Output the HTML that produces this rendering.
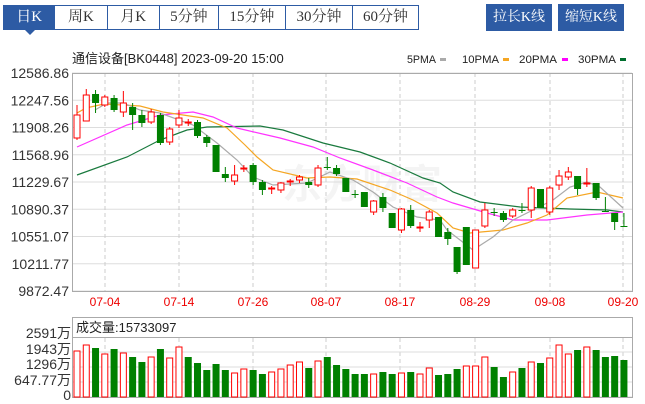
<!DOCTYPE html>
<html><head><meta charset="utf-8"><style>
body{margin:0;width:645px;height:404px;background:#fff;overflow:hidden;font-family:"Liberation Sans","Noto Sans CJK SC",sans-serif;position:relative}
.tabs{position:absolute;left:3px;top:5px;height:25px;display:flex;border:1px solid #2d5ba4;box-sizing:border-box;width:416px}
.tabs div{height:23px;line-height:23px;text-align:center;font-size:15px;color:#333;border-right:1px solid #2d5ba4;font-family:"Liberation Serif","Noto Serif CJK SC",serif}
.tabs div:last-child{border-right:none}
.tabs .on{background:#2d5ba4;color:#fff;position:relative}
.tabs .on:after{content:"";position:absolute;left:20px;top:23px;border:6px solid transparent;border-top:6px solid #2d5ba4}
.btn{position:absolute;top:4px;height:27px;line-height:27px;background:#2d5ba4;color:#fff;font-size:14px;text-align:center;width:66px;font-family:"Liberation Serif","Noto Serif CJK SC",serif}
svg{position:absolute;left:0;top:0}
</style></head><body>
<div class="tabs"><div class="on" style="width:51px">日K</div><div style="width:52px">周K</div><div style="width:52px">月K</div><div style="width:59px">5分钟</div><div style="width:67px">15分钟</div><div style="width:67px">30分钟</div><div style="width:66px">60分钟</div></div>
<div class="btn" style="left:486px">拉长K线</div>
<div class="btn" style="left:558px">缩短K线</div>
<svg id="s" width="645" height="404" xmlns="http://www.w3.org/2000/svg" font-family="Liberation Sans, Noto Sans CJK SC, sans-serif">
<text x="72" y="63" font-size="13" fill="#222">通信设备[BK0448] 2023-09-20 15:00</text>
<g font-size="11" fill="#222">
<text x="407" y="63" textLength="29" lengthAdjust="spacingAndGlyphs">5PMA</text><rect x="440" y="58" width="6" height="3" fill="#aaa"/>
<text x="462" y="63" textLength="37" lengthAdjust="spacingAndGlyphs">10PMA</text><rect x="503" y="58" width="6" height="3" fill="#f5a623"/>
<text x="519" y="63" textLength="38" lengthAdjust="spacingAndGlyphs">20PMA</text><rect x="562" y="58" width="6" height="3" fill="#f0f"/>
<text x="578" y="63" textLength="38" lengthAdjust="spacingAndGlyphs">30PMA</text><rect x="620" y="58" width="6" height="3" fill="#006f2e"/>
</g>
<text x="362" y="198" font-size="40" fill="#000" opacity="0.04" text-anchor="middle" font-weight="bold">东方财富</text>
<g font-size="14" fill="#333" text-anchor="end" id="yl"></g>
<g font-size="12" fill="#e00" text-anchor="middle">
<text x="105" y="306">07-04</text><text x="179" y="306">07-14</text><text x="253" y="306">07-26</text><text x="326" y="306">08-07</text><text x="400" y="306">08-17</text><text x="475" y="306">08-29</text><text x="550" y="306">09-08</text><text x="623" y="306">09-20</text>
</g>
<rect x="72.5" y="317.5" width="560" height="20" fill="#fff" stroke="#aaa"/>
<text x="76" y="332" font-size="13" fill="#222">成交量:15733097</text>
<g font-size="14" fill="#333" text-anchor="end">
<text x="71" y="338">2591万</text><text x="71" y="354">1943万</text><text x="71" y="369">1296万</text><text x="71" y="385">647.77万</text><text x="71" y="400">0</text>
</g>
<g id="g"></g>
</svg>
<script>
var g=document.getElementById('g'),h='';
var labs=["12586.86","12247.56","11908.26","11568.96","11229.67","10890.37","10551.07","10211.77","9872.47"];
var yl='';
for(var i=0;i<9;i++){var y=73+i*27.25;h+='<line x1="72" x2="632" y1="'+y+'" y2="'+y+'" stroke="#ddd"/>';yl+='<text x="69" y="'+(y+5)+'">'+labs[i]+'</text>';}
document.getElementById('yl').innerHTML=yl;
var vx=[105,179,253,326,400,475,550,623];
vx.forEach(function(x){h+='<line x1="'+x+'" x2="'+x+'" y1="73" y2="291" stroke="#ccc" stroke-dasharray="4,3"/>';h+='<line x1="'+x+'" x2="'+x+'" y1="338" y2="397" stroke="#ccc" stroke-dasharray="4,3"/>';});
for(var i=0;i<4;i++){var y=352+i*15;h+='<line x1="72" x2="632" y1="'+y+'" y2="'+y+'" stroke="#ddd"/>';}
h+='<rect x="72.5" y="73.5" width="560" height="218" fill="none" stroke="#aaa"/>';
h+='<rect x="72.5" y="337.5" width="560" height="60" fill="none" stroke="#aaa"/>';
function pl(pts,c){h+='<polyline fill="none" stroke="'+c+'" stroke-width="1.2" points="'+pts+'"/>';}
pl("77,175 127,157 160,140 187,130 207,127 260,126 283,130 323,143 360,152 390,163 423,178 440,183 453,192 480,202 520,207 570,209 607,210 623,212","#1a7a3e");
pl("77,147 127,125 160,115 193,112 213,117 237,128 267,135 280,138 313,147 340,158 373,170 407,183 437,197 453,203 487,213 513,220 547,220 587,215 623,212","#ff33ff");
pl("77,113 86,108 104,104 140,106 163,112 203,118 227,128 245,145 257,157 273,170 307,178 330,177 357,179 390,190 413,200 437,213 453,228 470,233 503,230 527,223 547,215 567,198 597,192 623,198","#f5a623");
pl("95,110 107,103 123,103 140,110 160,113 193,125 217,143 237,160 253,177 273,185 307,183 330,172 353,180 373,192 393,207 417,217 440,220 447,230 473,250 493,237 513,220 537,208 553,200 570,187 587,182 600,187 623,208","#aaa");
var c=[
['R',115,138,105,140],['R',95,121,89,121],['G',94,103,90,113],['R',97,105,95,107],['G',98,110,95,112],['R',103,112,91,117],['G',107,115,103,130],['G',115,123,110,127],['R',112,122,109,124],['G',115,143,113,145],
['R',129,142,127,145],['R',118,125,110,128],['R',122,122,119,126],['G',122,136,120,138],['G',137,143,135,147],['G',145,172,145,172],['G',174,178,167,182],['R',175,181,165,185],['R',168,168,165,172],['G',165,182,163,185],
['G',182,190,180,195],['R',188,188,186,194],['R',183,190,182,193],['R',181,181,179,186],['R',177,180,175,183],['G',182,185,178,188],['R',168,185,165,187],['G',167,167,157,170],['G',168,174,165,176],['G',178,192,178,192],
['G',194,194,190,198],['G',192,207,192,207],['R',201,212,200,215],['G',197,208,193,212],['G',213,228,213,228],['R',209,230,208,233],['G',210,226,205,228],['R',227,227,222,232],['R',212,220,210,228],['G',217,237,217,237],
['G',232,239,228,245],['G',247,272,247,274],['G',227,265,227,265],['R',230,268,230,268],['R',210,226,203,228],['G',212,212,208,216],['G',213,220,211,222],['R',210,216,208,218],['G',210,210,203,213],['R',188,210,186,218],
['G',189,208,189,208],['R',188,212,186,215],['R',176,185,170,190],['R',172,177,167,180],['G',176,189,176,195],['R',183,183,168,187],['G',183,198,183,200],['G',211,211,197,212],['G',213,222,213,230],['G',226,226,213,227]];
var v=[['R',351],['R',345],['G',348],['R',354],['G',349],['R',353],['G',357],['G',362],['R',357],['G',349],['R',358],['R',347],['G',357],['G',363],['G',370],['G',364],['G',370],['R',373],['R',369],['G',370],['G',374],['R',372],['R',369],['R',365],['R',362],['G',368],['R',361],['G',357],['G',365],['G',369],['G',374],['G',374],['R',374],['G',372],['G',374],['R',373],['G',372],['R',374],['R',368],['G',375],['G',374],['G',369],['R',366],['R',366],['R',357],['G',367],['G',377],['R',372],['G',368],['R',362],['G',363],['R',358],['R',345],['R',354],['G',350],['R',347],['G',350],['G',357],['G',356],['G',360]];
for(var i=0;i<60;i++){
 var x=77+i*9.27,d=c[i],col=d[0]=='R'?'#f00':'#008000';
 h+='<line x1="'+x+'" x2="'+x+'" y1="'+d[3]+'" y2="'+d[4]+'" stroke="'+col+'"/>';
 var hh=Math.max(d[2]-d[1],1);
 if(d[0]=='R')h+='<rect x="'+(x-3)+'" y="'+d[1]+'" width="6" height="'+hh+'" fill="#fff" stroke="#f00"/>';
 else h+='<rect x="'+(x-3.5)+'" y="'+d[1]+'" width="7" height="'+hh+'" fill="#008000"/>';
 var b=v[i];
 if(b[0]=='R')h+='<rect x="'+(x-3)+'" y="'+b[1]+'" width="6" height="'+(397-b[1])+'" fill="#fff" stroke="#f00"/>';
 else h+='<rect x="'+(x-3.5)+'" y="'+b[1]+'" width="7" height="'+(397-b[1])+'" fill="#008000"/>';
}
g.innerHTML=h;
</script>
</body></html>
